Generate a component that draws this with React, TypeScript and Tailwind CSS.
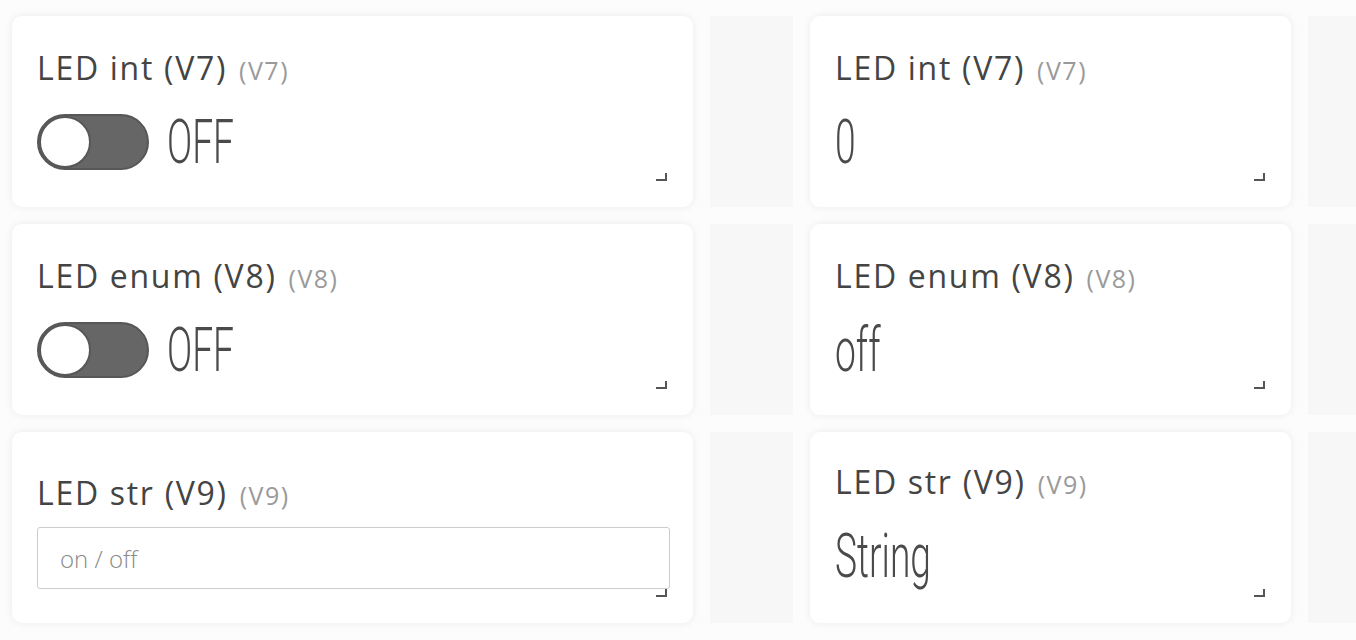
import type { ReactNode } from 'react';

const labelFont = { fontFamily: '"Open Sans", "Noto Sans", sans-serif' };
const valueFont = { fontFamily: 'Roboto, "Liberation Sans", sans-serif' };

function Corner() {
  return (
    <span className="pointer-events-none absolute bottom-[26px] right-[26px] h-[8px] w-[11px] border-b-2 border-r-2 border-[#555]" />
  );
}

function Label({ name, pin }: { name: string; pin: string }) {
  return (
    <div className="flex items-baseline gap-[12px] leading-none" style={labelFont}>
      <span className="text-[32px] tracking-[1.7px] text-[#444]">{name}</span>
      <span className="text-[25px] tracking-[1.5px] text-[#9a9a9a]">({pin})</span>
    </div>
  );
}

function Value({ children }: { children: ReactNode }) {
  return (
    <span
      className="inline-block origin-left scale-x-[0.6] text-[62px] font-light leading-none text-[#4a4a4a]"
      style={valueFont}
    >
      {children}
    </span>
  );
}

function Card({ children }: { children: ReactNode }) {
  return (
    <div className="relative rounded-[10px] bg-white px-[25px] shadow-[0_0_9px_rgba(0,0,0,0.07)]">
      {children}
      <Corner />
    </div>
  );
}

function Toggle() {
  return (
    <span className="relative inline-block h-[56px] w-[112px] shrink-0 rounded-full border-2 border-[#575757] bg-[#666]">
      <span className="absolute left-0 top-0 h-[52px] w-[52px] rounded-full border-2 border-[#575757] bg-white" />
    </span>
  );
}

function Placeholder() {
  return <div className="bg-[#f7f7f8]" />;
}

export default function App() {
  const rows = [
    { name: 'LED int (V7)', pin: 'V7', value: '0', kind: 'toggle' },
    { name: 'LED enum (V8)', pin: 'V8', value: 'off', kind: 'toggle' },
    { name: 'LED str (V9)', pin: 'V9', value: 'String', kind: 'input' },
  ];

  return (
    <div className="grid min-h-screen auto-rows-[191px] grid-cols-[681px_83px_481px_48px] gap-x-[17px] gap-y-[17px] bg-[#fcfcfc] pl-3 pt-4">
      {rows.map((r) => (
        <div key={r.pin} className="contents">
          <Card>
            {r.kind === 'toggle' ? (
              <>
                <div className="pt-[36px]">
                  <Label name={r.name} pin={r.pin} />
                </div>
                <div className="mt-[27px] flex h-[62px] items-center gap-[18px]">
                  <Toggle />
                  <Value>OFF</Value>
                </div>
              </>
            ) : (
              <>
                <div className="pt-[45px]">
                  <Label name={r.name} pin={r.pin} />
                </div>
                <input
                  placeholder="on / off"
                  className="mt-[18px] h-[62px] w-[633px] rounded-[3px] border border-[#ccc] bg-white px-[22px] text-[24px] font-light text-[#444] placeholder:text-[#8a8a8a] outline-none"
                  style={labelFont}
                />
              </>
            )}
          </Card>
          <Placeholder />
          <Card>
            <div className={r.kind === 'input' ? 'pt-[34px]' : 'pt-[36px]'}>
              <Label name={r.name} pin={r.pin} />
            </div>
            <div className="mt-[27px] flex h-[62px] items-center">
              <Value>{r.value}</Value>
            </div>
          </Card>
          <Placeholder />
        </div>
      ))}
    </div>
  );
}
